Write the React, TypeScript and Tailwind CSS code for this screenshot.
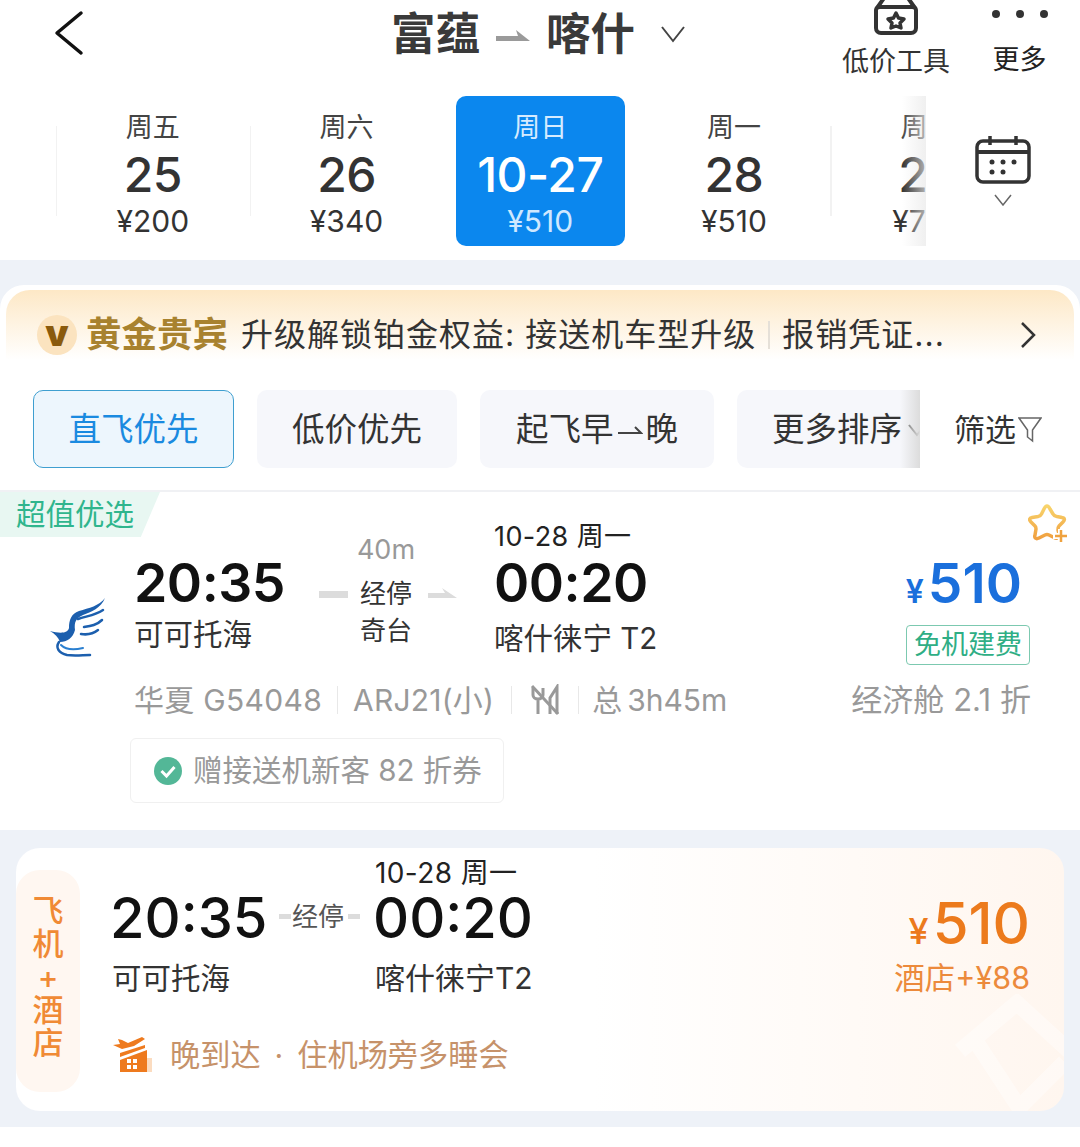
const days = [
  { week: "周五", day: "25", price: "¥200" },
  { week: "周六", day: "26", price: "¥340" },
  { week: "周日", day: "10-27", price: "¥510", active: true },
  { week: "周一", day: "28", price: "¥510" },
  { week: "周二", day: "29", price: "¥760" },
];

const sorts = [
  { label: "直飞优先", width: "w-[201px]", active: true },
  { label: "低价优先", width: "w-[200px]" },
];

function Bird() {
  return (
    <svg width="58" height="62" viewBox="0 0 58 62" fill="none">
      <path d="M56 0C50 8 40 10 30 13C22 16 20 22 20 30C19 35 12 36 1 33C6 36 9 39 11 44C18 44 24 40 26 32C25 24 27 20 34 17C42 14 52 10 56 0Z" fill="#1c5fae" />
      <path d="M54 12C47 17 38 18 29 21" stroke="#1c5fae" strokeWidth="2.500" strokeLinecap="round" />
      <path d="M53 22C48 27 42 28 35 29" stroke="#1c5fae" strokeWidth="2.500" strokeLinecap="round" />
      <path d="M49 32C44 36 38 37 32 36" stroke="#1c5fae" strokeWidth="2.500" strokeLinecap="round" />
      <path d="M10 44C6 50 10 55 18 57C26 58 34 57 41 57" stroke="#1c5fae" strokeWidth="2.500" strokeLinecap="round" />
      <path d="M12 47C17 52 26 52 34 50" stroke="#2a7fd0" strokeWidth="2" strokeLinecap="round" />
    </svg>
  );
}

function Dash({ arrow }: { arrow?: boolean }) {
  return (
    <svg width="29" height="12" viewBox="0 0 29 12" className="shrink-0">
      {arrow ? <path d="M0 5H17L14 0L29 10H0Z" fill="#dcdcdc" /> : <rect y="3" width="29" height="7" fill="#dcdcdc" />}
    </svg>
  );
}

export default function App() {
  return (
    <div className="h-[1147px] w-[1080px] overflow-hidden bg-white font-['Inter','Noto_Sans_CJK_SC',sans-serif] text-[#222]">
      <header className="flex h-[96px] items-start overflow-hidden">
        <svg width="32" height="46" viewBox="0 0 32 46" fill="none" className="ml-[53px] mt-[10px] shrink-0">
          <path d="M28 3L4 23L28 43" stroke="#111" strokeWidth="3.500" strokeLinecap="round" strokeLinejoin="round" />
        </svg>
        <div className="ml-[306px] flex h-[68px] items-center text-[44.500px] font-bold text-[#3a3a3a]">
          <span>富蕴</span>
          <svg width="34" height="14" viewBox="0 0 34 14" className="mx-[16px] mt-1">
            <path d="M0 7H22L20 1L34 12H0Z" fill="#9a9a9a" />
          </svg>
          <span>喀什</span>
          <svg width="26" height="18" viewBox="0 0 26 18" fill="none" className="ml-[25px]">
            <path d="M2 2L13 16L24 2" stroke="#444" strokeWidth="2" />
          </svg>
        </div>
        <div className="ml-auto flex pr-[33px]">
          <div className="flex w-[108px] flex-col items-center">
            <svg width="46" height="38" viewBox="0 0 46 38" fill="none" className="-mt-[2px]">
              <path d="M3 12V30C3 33 5 35 8 35H38C41 35 43 33 43 30V12C43 10 41 9 39 9H7C5 9 3 10 3 12Z" stroke="#333" strokeWidth="4" />
              <path d="M4 10L11 0M42 10L35 0" stroke="#333" strokeWidth="4" />
              <path d="M23 15L25.500 20L31 21L27 25L28 30L23 28L18 30L19 25L15 21L20.500 20Z" stroke="#333" strokeWidth="3.500" strokeLinejoin="round" />
            </svg>
            <span className="mt-[8px] text-[27px] leading-[36px] text-[#333]">低价工具</span>
          </div>
          <div className="ml-[42px] flex w-[55px] flex-col items-center">
            <div className="mt-[10px] flex h-[8px] gap-[16px]">
              <span className="h-[8px] w-[8px] rounded-full bg-[#333]" />
              <span className="h-[8px] w-[8px] rounded-full bg-[#333]" />
              <span className="h-[8px] w-[8px] rounded-full bg-[#333]" />
            </div>
            <span className="mt-[24px] text-[27px] leading-[36px] text-[#222]">更多</span>
          </div>
        </div>
      </header>

      <section className="flex h-[164px] items-start">
        <div className="relative ml-[56px] flex h-[150px] w-[870px] overflow-hidden">
          {days.map((d, i) => (
            <div key={d.week} className="relative flex w-[193.7px] shrink-0 justify-center">
              {i !== 2 && i !== 3 && <span className="absolute left-0 top-[30px] h-[90px] w-[1px] bg-[#f2f2f2]" />}
              {i === 3 && <span className="absolute right-0 top-[30px] h-[90px] w-[1px] bg-[#f2f2f2]" />}
              <div className={`flex h-[150px] w-[169px] flex-col items-center rounded-[10px] pt-[14px] ${d.active ? "bg-[#0b87ee] text-white" : "text-[#333]"}`}>
                <span className={`text-[27px] leading-[36px] ${d.active ? "text-[#d5ebff]" : "text-[#444]"}`}>{d.week}</span>
                <span className="mt-[1px] text-[48px] font-medium leading-[56px] tracking-[-0.5px]">{d.day}</span>
                <span className={`text-[30px] leading-[36px] ${d.active ? "text-[#cfe8ff]" : ""}`}>{d.price}</span>
              </div>
            </div>
          ))}
          <div className="absolute right-0 top-0 h-full w-[24px] bg-gradient-to-r from-transparent to-[#e9e9e9]/70" />
        </div>
        <div className="flex flex-1 flex-col items-center pt-[40px]">
          <svg width="56" height="48" viewBox="0 0 56 48" fill="none">
            <rect x="2" y="5" width="52" height="41" rx="6" stroke="#333" strokeWidth="3.500" />
            <path d="M2 16H54" stroke="#333" strokeWidth="4" />
            <path d="M15 0V9M41 0V9" stroke="#333" strokeWidth="3.500" />
            <circle cx="17" cy="26" r="2.500" fill="#333" />
            <circle cx="28" cy="26" r="2.500" fill="#333" />
            <circle cx="39" cy="26" r="2.500" fill="#333" />
            <circle cx="17" cy="36" r="2.500" fill="#333" />
            <circle cx="28" cy="36" r="2.500" fill="#333" />
          </svg>
          <svg width="18" height="12" viewBox="0 0 18 12" fill="none" className="mt-[10px]">
            <path d="M1 1L9 11L17 1" stroke="#666" strokeWidth="1.500" />
          </svg>
        </div>
      </section>

      <section className="bg-[#eef2f8] pt-[25px]">
        <div className="rounded-t-[24px] bg-white px-[6px] pt-[5px]">
          <div className="flex h-[70px] items-center rounded-t-[24px] bg-gradient-to-b from-[#fde8c6] to-white pl-[31px] pt-[20px]">
            <span className="flex h-[40px] w-[40px] items-center justify-center rounded-full bg-[#fbe3bf] pb-[6px] text-[37px] font-black leading-none text-[#8a5a0c]">v</span>
            <span className="ml-[9px] text-[35.500px] font-bold text-[#a8822f]">黄金贵宾</span>
            <span className="ml-[13px] text-[32px] tracking-[1px] text-[#333]">升级解锁铂金权益: 接送机车型升级</span>
            <span className="mx-[12px] h-[28px] w-[2px] bg-[#e5e0d8]" />
            <span className="text-[32px] tracking-[1px] text-[#333]">报销凭证...</span>
            <svg width="18" height="28" viewBox="0 0 18 28" fill="none" className="ml-auto mr-[37px]">
              <path d="M3 2L15 14L3 26" stroke="#333" strokeWidth="2.500" />
            </svg>
          </div>
          <div className="-mx-[6px] flex h-[130px] items-start pt-[30px]">
            <div className="relative flex h-[78px] w-[920px] shrink-0 gap-[23px] overflow-hidden pl-[33px]">
              {sorts.map((s) => (
                <div
                  key={s.label}
                  className={`flex h-[78px] shrink-0 items-center justify-center rounded-[10px] pt-[2px] text-[32.500px] ${s.width} ${s.active ? "border border-[#3f9fd0] bg-[#edf6fd] text-[#1a8ae0]" : "bg-[#f6f7fb] text-[#333]"}`}
                >
                  {s.label}
                </div>
              ))}
              <div className="flex h-[78px] w-[234px] shrink-0 items-center justify-center rounded-[10px] bg-[#f6f7fb] pt-[2px] text-[32.500px] text-[#333]">
                起飞早
                <svg width="26" height="10" viewBox="0 0 26 10" fill="none" className="mx-[3px] shrink-0">
                  <path d="M1 8H24L18 2" stroke="#444" strokeWidth="2" />
                </svg>
                晚
              </div>
              <div className="flex h-[78px] w-[230px] shrink-0 items-center rounded-[10px] bg-[#f6f7fb] pl-[35px] pt-[2px] text-[32.500px] text-[#333]">
                更多排序
                <svg width="20" height="14" viewBox="0 0 20 14" fill="none" className="ml-[5px] shrink-0">
                  <path d="M2 2L10 12L18 2" stroke="#555" strokeWidth="2" />
                </svg>
              </div>
              <div className="absolute right-0 top-0 h-[78px] w-[20px] bg-gradient-to-r from-transparent to-[#dcdcdc]" />
            </div>
            <div className="flex h-[78px] flex-1 items-center pl-[34px] pt-[2px] text-[31px] text-[#333]">
              <span>筛选</span>
              <svg width="24" height="28" viewBox="0 0 24 28" fill="none" className="ml-[2px]">
                <path d="M1 2H23L14.500 14V25L9.500 21V14Z" stroke="#666" strokeWidth="1.500" />
              </svg>
            </div>
          </div>
        </div>
      </section>

      <section className="relative h-[340px] border-t-2 border-[#f0f1f4] pt-[26px]">
        <span className="absolute left-0 top-0 flex h-[45px] w-[160px] items-center rounded-br-[20px] bg-[#e8f7f2] pl-[16px] text-[29.500px] text-[#2fb58d] [clip-path:polygon(0_0,100%_0,88%_100%,0_100%)]">超值优选</span>
        <svg width="44" height="42" viewBox="0 0 44 42" fill="none" className="absolute right-[8px] top-[11px]">
          <defs>
            <linearGradient id="starFade" x1="0" y1="0" x2="0" y2="1">
              <stop offset="0" stopColor="#f8d46c" />
              <stop offset="1" stopColor="#f0a040" />
            </linearGradient>
          </defs>
          <path d="M19 3C20 3 21 4 22 6L25 11C26 13 27 13 29 13.500L34 14.500C37 15 37 17 35 19L31 23C30 24 30 25 30 27L31 31C31 35 29 36 26 34.500L21 32C20 31.500 18 31.500 17 32L11 35C8 36.500 6 35 7 32L8 26C8 24.500 8 24 7 23L3 19C1 17 1 15 4 14.500L10 13.500C12 13 12.500 13 13.500 11L16 6C17 4 18 3 19 3Z" stroke="url(#starFade)" strokeWidth="3.500" strokeLinejoin="round" />
          <path d="M25 33H41M33 26V40" stroke="#fff" strokeWidth="6" />
          <path d="M27 33H39M33 27V39" stroke="#efa23f" strokeWidth="2.500" />
        </svg>

        <div className="flex h-[162px] pr-[50px]">
          <div className="w-[85px] pl-[49px] pt-[80px]">
            <Bird />
          </div>
          <div className="ml-[49px] w-[185px] pt-[38px]">
            <div className="text-[53.500px] font-semibold leading-[54px] tracking-[-0.5px] text-[#111]">20:35</div>
            <div className="mt-[4px] text-[29.500px] leading-[40px] text-[#333]">可可托海</div>
          </div>
          <div className="flex w-[176px] flex-col items-start pt-[14px]">
            <div className="w-[138px] pr-[4px] text-center text-[27px] leading-[36px] text-[#999]">40m</div>
            <div className="relative mt-[8px] flex h-[36px] w-[138px] items-center justify-between">
              <Dash />
              <span className="mr-[4px] text-[26px] leading-[36px] text-[#333]">经停</span>
              <Dash arrow />
            </div>
            <div className="mt-[1px] w-[138px] pr-[4px] text-center text-[26px] leading-[36px] text-[#333]">奇台</div>
          </div>
          <div className="pt-[1px]">
            <div className="-ml-[1px] text-[27px] leading-[36px] tracking-[0.4px] text-[#222]">10-28 周一</div>
            <div className="-ml-[1px] mt-[1px] text-[53.500px] font-semibold leading-[54px] tracking-[-0.5px] text-[#111]">00:20</div>
            <div className="-ml-[1px] mt-[8px] text-[29.500px] leading-[40px] text-[#333]">喀什徕宁 T2</div>
          </div>
          <div className="ml-auto flex flex-col items-end pt-[38px]">
            <div className="flex items-baseline pr-[8px] text-[#1a6fdc]">
              <span className="mr-[4px] text-[32px] font-semibold">¥</span>
              <span className="text-[55px] font-semibold leading-[54px]">510</span>
            </div>
            <span className="mt-[9px] flex h-[40px] w-[124px] items-center justify-center rounded-[4px] border border-[#7cc9b0] text-[27px] text-[#2fae85]">免机建费</span>
          </div>
        </div>

        <div className="flex h-[40px] items-center pl-[134px] pr-[49px] text-[30px] text-[#999]">
          <span className="tracking-[0.3px]">华夏 G54048</span>
          <span className="mx-[15px] h-[28px] w-[1px] bg-[#e8e8e8]" />
          <span className="tracking-[0.2px]">ARJ21(小)</span>
          <span className="ml-[17px] mr-[18px] h-[28px] w-[1px] bg-[#e8e8e8]" />
          <svg width="30" height="32" viewBox="0 0 30 32" fill="none">
            <path d="M3 4V11C3 13 5 15 8 15V30M13 4V11C13 13 11 15 8 15" stroke="#999" strokeWidth="3" />
            <path d="M20 30V14L27 3V30" stroke="#999" strokeWidth="3" />
            <path d="M2 2L28 30" stroke="#999" strokeWidth="3" />
          </svg>
          <span className="ml-[18px] mr-[13px] h-[28px] w-[1px] bg-[#e8e8e8]" />
          <span>总</span>
          <span className="ml-[5px]">3h45m</span>
          <span className="ml-auto text-[31px]">经济舱</span>
          <span className="ml-[9px] text-[31px]">2.1</span>
          <span className="ml-[9px] text-[31px]">折</span>
        </div>

        <div className="ml-[130px] mt-[18px] flex h-[65px] w-[374px] items-center rounded-[6px] border border-[#f0f0f0] pl-[23px] text-[29.500px] text-[#999]">
          <svg width="28" height="28" viewBox="0 0 28 28" className="mr-[11px] shrink-0">
            <circle cx="14" cy="14" r="14" fill="#53b797" />
            <path d="M7.500 14L12.500 19L20.500 10" stroke="#fff" strokeWidth="3" fill="none" />
          </svg>
          赠接送机新客 82 折券
        </div>
      </section>

      <section className="bg-[#eef2f8] px-[16px] pb-[16px] pt-[18px]">
        <div className="relative flex h-[263px] overflow-hidden rounded-[24px] bg-gradient-to-r from-white from-55% to-[#fff6ef]">
          <svg width="125" height="125" viewBox="0 0 110 110" fill="none" className="absolute bottom-[-8px] right-[-12px]">
            <path d="M8 50L58 8L104 50M22 42L60 100L100 60" stroke="#fff" strokeOpacity="0.4" strokeWidth="14" />
          </svg>
          <div className="mt-[22px] flex h-[222px] w-[64px] shrink-0 flex-col items-center rounded-[24px] bg-[#fff7f1] pt-[24px] text-[31px] font-medium leading-[33px] text-[#f08a35]">
            <span>飞</span>
            <span>机</span>
            <span>+</span>
            <span>酒</span>
            <span>店</span>
          </div>
          <div className="relative flex-1 pl-[30px] pr-[34px]">
            <div className="flex h-[130px]">
              <div className="w-[169px] pt-[42px]">
                <div className="text-[56px] font-medium leading-[56px] text-[#111]">20:35</div>
                <div className="mt-[12px] pl-[2px] text-[29.500px] leading-[40px] text-[#333]">可可托海</div>
              </div>
              <div className="flex w-[94px] items-start justify-between pt-[52px] pr-[13px]">
                <span className="mt-[14px] h-[5px] w-[12px] bg-[#dcdcdc]" />
                <span className="-ml-[3px] text-[26px] leading-[34px] text-[#555]">经停</span>
                <span className="mt-[14px] h-[5px] w-[12px] bg-[#dcdcdc]" />
              </div>
              <div className="pt-[9px]">
                <div className="pl-[2px] text-[28px] leading-[33px] tracking-[0.4px] text-[#222]">10-28 周一</div>
                <div className="text-[56px] font-medium leading-[56px] text-[#111]">00:20</div>
                <div className="mt-[12px] pl-[2px] text-[30px] leading-[40px] text-[#333]">喀什徕宁T2</div>
              </div>
              <div className="ml-auto flex flex-col items-end pt-[47px] text-[#ec7a1c]">
                <div className="flex items-baseline">
                  <span className="mr-[4px] text-[36px] font-medium">¥</span>
                  <span className="text-[58px] font-medium leading-[56px]">510</span>
                </div>
                <span className="text-[30.500px] leading-[40px] text-[#ec8a3c]">酒店+¥88</span>
              </div>
            </div>
            <div className="mt-[57px] flex items-center pl-[2px] text-[30.200px] leading-[40px] text-[#c6926a]">
              <svg width="40" height="38" viewBox="0 0 40 38" className="shrink-0">
                <rect x="35" y="22" width="5" height="14" fill="#fbdcc0" />
                <path d="M1 9L8 8L6 3L10 4L16 7L30 1L33 3L22 10L10 13Z" fill="#ee7a1e" />
                <path d="M8 17L33 9V12L8 21Z" fill="#ee7a1e" />
                <path d="M8 24L35 14V36H8Z" fill="#ee7a1e" />
                <path d="M15 23H19V27H15ZM21 23H25V27H21ZM15 29H19V33H15ZM21 29H25V33H21Z" fill="#fff" />
              </svg>
              <span className="ml-[18px]">晚到达</span>
              <span className="mx-[14px]">·</span>
              <span>住机场旁多睡会</span>
            </div>
          </div>
        </div>
      </section>
    </div>
  );
}
